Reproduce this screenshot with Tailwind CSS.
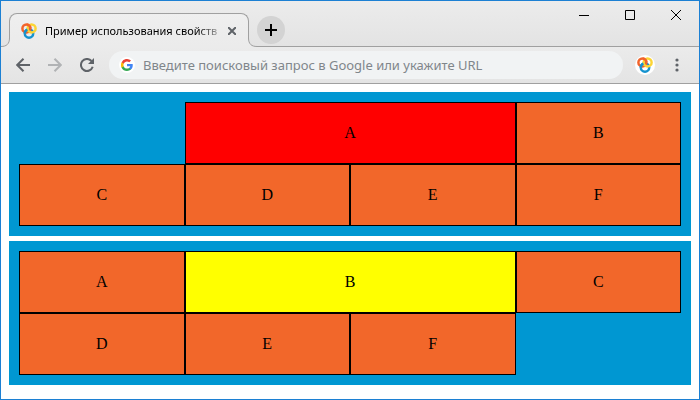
<!DOCTYPE html>
<html lang="ru">
<head>
    <meta charset="UTF-8">
    <meta name="viewport" content="width=device-width, initial-scale=1.0">
    <title>Пример использования свойств</title>
    <script src="https://cdn.jsdelivr.net/npm/@tailwindcss/browser@4"></script>
</head>
<body class="bg-white">
    <div class="flex min-h-screen flex-col border border-[#1c80d3] font-['Noto_Sans','Open_Sans',sans-serif]">
        <!-- Tab strip -->
        <header class="flex h-[46px] items-end bg-linear-to-b from-[#ececec] to-[#e3e3e3]">
            <svg class="relative h-[34px] w-2 shrink-0 overflow-visible" viewBox="0 0 8 34" fill="none">
                <path d="M0 33.5C5.5 33.5 8.5 31 8.5 25V34H0Z" fill="#ebebeb"/>
                <path d="M0 33.5C5.5 33.5 8.5 31 8.5 25" stroke="#a0a0a0"/>
            </svg>
            <div class="flex h-[34px] w-60 shrink-0 flex-col rounded-t-lg bg-linear-to-b from-[#efefef] to-[#ebebeb]">
                <div class="flex h-[26px] items-center rounded-t-lg border border-b-0 border-[#a0a0a0] pt-2 pr-2 pl-[11px]">
                    <svg class="h-4 w-4 shrink-0" viewBox="0 0 16 16" fill="none" stroke-width="2.5">
                        <path d="M8 4L10.500 8H6Z" fill="#f2632a"/>
                        <circle cx="8" cy="10.500" r="4.200" stroke="#1593cf"/>
                        <circle cx="5.400" cy="5.400" r="4" stroke="#f2632a"/>
                        <circle cx="10.600" cy="5.400" r="4" stroke="#fcd535"/>
                        <path d="M3.800 10.500A4.200 4.200 0 0 1 6.400 6.600" stroke="#1593cf"/>
                        <path d="M5.800 1.400A4 4 0 0 1 9.300 5" stroke="#f2632a"/>
                    </svg>
                    <span class="ml-2 min-w-0 flex-1 bg-linear-to-r from-black from-85% to-black/10 bg-clip-text text-[11px] leading-4 whitespace-nowrap text-transparent">Пример использования свойств</span>
                    <button type="button" aria-label="Закрыть вкладку" class="flex h-4 w-4 shrink-0 items-center justify-center">
                        <svg class="h-2 w-2" viewBox="0 0 8 8" stroke="#5f6368" stroke-width="2"><path d="M0 0L8 8M8 0L0 8"/></svg>
                    </button>
                </div>
            </div>
            <svg class="relative h-[34px] w-2 shrink-0 overflow-visible" viewBox="0 0 8 34" fill="none">
                <path d="M-.5 25C-.5 31 2.5 33.5 8 33.5V34H-.5Z" fill="#ebebeb"/>
                <path d="M-.5 25C-.5 31 2.5 33.5 8 33.5" stroke="#a0a0a0"/>
            </svg>
            <div class="flex h-full flex-1 justify-between border-b border-[#a0a0a0]">
                <button type="button" aria-label="Новая вкладка" class="mt-[15px] flex h-7 w-7 items-center justify-center rounded-full bg-[#d3d3d3]">
                    <svg class="h-3 w-3" viewBox="0 0 12 12" stroke="#000" stroke-width="2"><path d="M6 0V12M0 6H12"/></svg>
                </button>
                <div class="flex h-7">
                    <button type="button" aria-label="Свернуть" class="flex w-[46px] items-center justify-center">
                        <svg class="h-[10px] w-[10px]" viewBox="0 0 10 10" stroke="#000"><path d="M0 5.5H10"/></svg>
                    </button>
                    <button type="button" aria-label="Развернуть" class="flex w-[46px] items-center justify-center">
                        <svg class="h-[10px] w-[10px]" viewBox="0 0 10 10" fill="none" stroke="#000"><path d="M.5 .5H9.5V9.5H.5Z"/></svg>
                    </button>
                    <button type="button" aria-label="Закрыть" class="flex w-[46px] items-center justify-center">
                        <svg class="h-[10px] w-[10px]" viewBox="0 0 10 10" stroke="#000"><path d="M0 0L10 10M10 0L0 10"/></svg>
                    </button>
                </div>
            </div>
        </header>

        <!-- Toolbar -->
        <nav class="flex h-[37px] items-center border-b border-[#a0a0a0] bg-linear-to-b from-[#ebebeb] to-[#e4e4e4] px-3">
            <button type="button" aria-label="Назад" class="flex h-5 w-5 items-center justify-center">
                <svg class="h-[14px] w-[14px]" viewBox="0 0 14 14" fill="none" stroke="#5f6368" stroke-width="2"><path d="M14 7H1.5M7.5 .7L1.2 7L7.5 13.3"/></svg>
            </button>
            <button type="button" aria-label="Вперёд" class="ml-3 flex h-5 w-5 items-center justify-center">
                <svg class="h-[14px] w-[14px]" viewBox="0 0 14 14" fill="none" stroke="#b1b3b5" stroke-width="2"><path d="M0 7H12.5M6.5 .7L12.8 7L6.5 13.3"/></svg>
            </button>
            <button type="button" aria-label="Обновить" class="ml-3 flex h-5 w-5 items-center justify-center">
                <svg class="h-[14px] w-[14px]" viewBox="0 0 14 14" fill="none"><path d="M12.7 8.8A6 6 0 1 1 11.5 3" stroke="#5f6368" stroke-width="2"/><path d="M14 0V6H8Z" fill="#5f6368"/></svg>
            </button>
            <form class="ml-3 flex h-7 min-w-0 flex-1 items-center rounded-full bg-[#f1f3f4] pr-4 pl-[10px]">
                <span class="flex h-4 w-4 shrink-0 items-center justify-center rounded-full bg-white">
                    <svg class="h-3 w-3" viewBox="0 0 18 18">
                        <path fill="#4285f4" d="M17.640 9.200c0-.64-.06-1.250-.16-1.840H9v3.480h4.840a4.140 4.140 0 0 1-1.800 2.720v2.260h2.910c1.700-1.570 2.690-3.880 2.690-6.620z"/>
                        <path fill="#34a853" d="M9 18c2.430 0 4.470-.8 5.960-2.180l-2.910-2.260c-.81.54-1.840.86-3.050.86-2.340 0-4.330-1.580-5.040-3.710H.96v2.330A9 9 0 0 0 9 18z"/>
                        <path fill="#fbbc05" d="M3.960 10.710a5.400 5.400 0 0 1 0-3.420V4.960H.96a9 9 0 0 0 0 8.080z"/>
                        <path fill="#ea4335" d="M9 3.580c1.320 0 2.510.45 3.440 1.350l2.580-2.590A9 9 0 0 0 .96 4.960l3 2.330C4.670 5.160 6.660 3.580 9 3.580z"/>
                    </svg>
                </span>
                <input type="text" aria-label="Адресная строка" placeholder="Введите поисковый запрос в Google или укажите URL" class="ml-2 h-7 min-w-0 flex-1 bg-transparent text-[13px] leading-5 outline-none placeholder:text-[#80868b]">
            </form>
            <button type="button" aria-label="Профиль" class="ml-3 flex h-5 w-5 items-center justify-center rounded-full bg-white">
                <svg class="h-4 w-4" viewBox="0 0 16 16" fill="none" stroke-width="2.5">
                    <path d="M8 4L10.500 8H6Z" fill="#f2632a"/>
                    <circle cx="8" cy="10.500" r="4.200" stroke="#1593cf"/>
                    <circle cx="5.400" cy="5.400" r="4" stroke="#f2632a"/>
                    <circle cx="10.600" cy="5.400" r="4" stroke="#fcd535"/>
                    <path d="M3.800 10.500A4.200 4.200 0 0 1 6.400 6.600" stroke="#1593cf"/>
                    <path d="M5.800 1.400A4 4 0 0 1 9.300 5" stroke="#f2632a"/>
                </svg>
            </button>
            <button type="button" aria-label="Меню" class="ml-3 flex h-5 w-5 items-center justify-center">
                <svg class="h-[14px] w-1" viewBox="0 0 4 14" fill="#5f6368"><circle cx="2" cy="2" r="1.600"/><circle cx="2" cy="7" r="1.600"/><circle cx="2" cy="12" r="1.600"/></svg>
            </button>
        </nav>

        <!-- Page -->
        <main class="flex flex-1 flex-col gap-[5px] bg-white p-2 text-center font-['Liberation_Serif',serif] text-[16px] leading-5 text-black">
            <div class="grid grid-cols-4 bg-[#0097d2] p-[10px]">
                <div class="col-span-2 col-start-2 border border-black bg-[red] py-5">A</div>
                <div class="border border-black bg-[#f2672a] py-5">B</div>
                <div class="border border-black bg-[#f2672a] py-5">C</div>
                <div class="border border-black bg-[#f2672a] py-5">D</div>
                <div class="border border-black bg-[#f2672a] py-5">E</div>
                <div class="border border-black bg-[#f2672a] py-5">F</div>
            </div>
            <div class="grid grid-cols-4 bg-[#0097d2] p-[10px]">
                <div class="border border-black bg-[#f2672a] py-5">A</div>
                <div class="col-span-2 border border-black bg-[yellow] py-5">B</div>
                <div class="border border-black bg-[#f2672a] py-5">C</div>
                <div class="border border-black bg-[#f2672a] py-5">D</div>
                <div class="border border-black bg-[#f2672a] py-5">E</div>
                <div class="border border-black bg-[#f2672a] py-5">F</div>
            </div>
        </main>
    </div>
</body>
</html>
